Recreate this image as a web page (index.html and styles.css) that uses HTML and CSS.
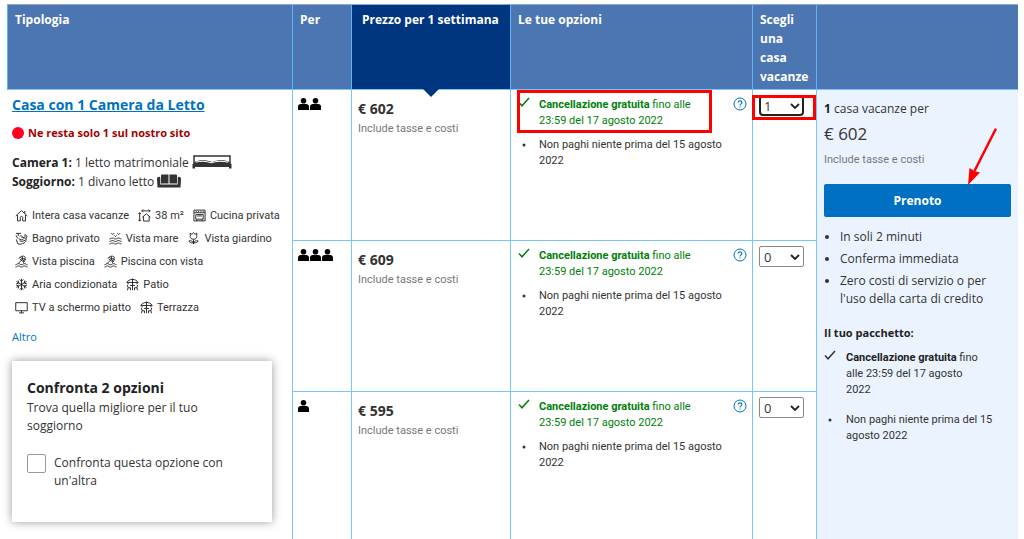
FILE: index.html
```html
<!DOCTYPE html>
<html lang="it">
<head>
<meta charset="utf-8">
<meta name="viewport" content="width=device-width, initial-scale=1">
<title>Casa con 1 Camera da Letto</title>
<link rel="stylesheet" href="styles.css">
</head>
<body>
<svg class="sprite" aria-hidden="true">
  <symbol id="person" viewBox="0 0 11 12"><circle cx="5.500" cy="2.800" r="2.800"/><path d="M0 12V8.700C0 7 1.300 6.300 2.700 6h5.600C9.700 6.300 11 7 11 8.700V12z"/></symbol>
  <symbol id="check" viewBox="0 0 12 10"><path d="M1 5.600l3 3.200L11 1" fill="none" stroke="currentColor" stroke-width="1.500"/></symbol>
  <symbol id="dot" viewBox="0 0 12 10"><circle cx="6" cy="5" r="1.500"/></symbol>
  <symbol id="chevron" viewBox="0 0 10 6"><path d="M1 1l4 4 4-4" fill="none" stroke="currentColor" stroke-width="1.800"/></symbol>
  <symbol id="help" viewBox="0 0 14 14"><circle cx="7" cy="7" r="6" fill="none" stroke="currentColor"/><path d="M5.200 5.600C5.200 3.200 8.900 3.300 8.900 5.500 8.900 6.800 7 6.900 7 8.400M7 9.500v1.100" fill="none" stroke="currentColor" stroke-width="1.100"/></symbol>
  <symbol id="house" viewBox="0 0 14 14"><path d="M.8 7.500L7 1.700l6.200 5.800M2.700 6.500v6.300h3V9.200c0-1.600 2.600-1.600 2.600 0v3.600h3V6.500M10.500 4.500V2.200"/></symbol>
  <symbol id="size" viewBox="0 0 14 14"><path d="M4 2h9M5.500.5L4 2l1.500 1.500M11.500.5L13 2l-1.500 1.500M1.800 4v9M.3 5.500L1.800 4l1.500 1.500M.3 11.500L1.800 13l1.500-1.500M4.500 9L9 5.200 13.500 9M6 8v5h6V8"/></symbol>
  <symbol id="oven" viewBox="0 0 14 14"><path d="M1 1.200h12v11.600H1zM1 4h12M3 2.600h1M5.500 2.600h1M8 2.600h1M10.500 2.600h1M3 6h8v5H3zM4.500 7.500h5M4 13v-1.500M10 13v-1.500"/></symbol>
  <symbol id="bath" viewBox="0 0 14 14"><path d="M1 1.500h5.500M3.500 1.500v2.800M1 3.500l2 3.500M1.500 8l1.300 4.500c2 1 4 .8 5.500-.5M5 4.500c2.500-1.500 3.500 1 2 2M4 7c2 1.800 4 1.800 5.500 0M5 9.500c2 1 4.500.5 6-1M9.500 3.500c2.500-1.500 4.500 1.500 2.500 3M8 5.500l4 1.500c.5 2-1 4.500-3.500 5.500M11.500 4.500l-1.500 1"/></symbol>
  <symbol id="sea" viewBox="0 0 14 14"><path d="M2.500 1.200l1.500 1.500 1.500-1.500M9 1.200l1.500 1.500L12 1.200M5.700 3.700L7 5l1.300-1.300M.5 7.500c1.500 0 1.500-1 3.200-1s1.600 1 3.300 1 1.600-1 3.300-1 1.700 1 3.200 1M.5 10.200c1.500 0 1.500-1 3.200-1s1.600 1 3.300 1 1.600-1 3.300-1 1.700 1 3.200 1M.5 12.900c1.500 0 1.500-1 3.200-1s1.600 1 3.300 1 1.600-1 3.300-1 1.700 1 3.200 1"/></symbol>
  <symbol id="flower" viewBox="0 0 14 14"><path d="M3.500 1.200L5.300 2.500 7 .9l1.700 1.600 1.800-1.300v3.600c0 1.700-1.200 3-3.500 3s-3.500-1.300-3.500-3zM7 8v5M7 11.800c-3.200 0-4.500-.8-5-2.200 2.500-.5 4 .2 5 2.200M7 11.800c3.200 0 4.500-.8 5-2.200-2.500-.5-4 .2-5 2.200"/></symbol>
  <symbol id="pool" viewBox="0 0 14 14"><path d="M5.500 4.500L9 7.200M3.500 9L8 4.500C6 1.500 4 2.500 4.500 4M5.500 2.500C7.500.5 11 .8 11.500 3.500M8 4.500c2-1.500 3.500-1 3.500.8M8 1.500v3l2 2.500-1 1.500M9.500 4.500c1.500 0 2 2-.5 2.500M.5 10.500c1.500 0 1.500-1.200 3.200-1.200s1.600 1.200 3.300 1.200 1.600-1.200 3.300-1.200 1.700 1.200 3.200 1.200M.5 13c1.500 0 1.500-1.200 3.200-1.200S5.300 13 7 13s1.600-1.200 3.300-1.200S12 13 13.500 13"/></symbol>
  <symbol id="snow" viewBox="0 0 14 14"><path d="M7 .8v12.400M1.600 3.900l10.800 6.200M1.600 10.100l10.800-6.200M5 1.500l2 2 2-2M5 12.500l2-2 2 2M1.300 6.300L4 5.500 3.400 2.700M12.700 6.300L10 5.500l.6-2.800M1.300 7.700l2.700.8-.6 2.800M12.700 7.700l-2.700.8.600 2.800"/></symbol>
  <symbol id="patio" viewBox="0 0 14 14"><path d="M.8 4.800C2 2.800 4.500 1.500 7 1.500s5 1.300 6.200 3.300zM7 .5v12.700M2.200 5v1.800M11.800 5v1.800M4.200 8h5.600M1.500 7.500l.8 3h2.500v2.700M2.300 10.500l-.8 2.700M12.500 7.500l-.8 3H9.200v2.700M11.700 10.500l.8 2.700"/></symbol>
  <symbol id="tv" viewBox="0 0 14 14"><path d="M.8 1.800h12.400v8.700H.8zM7 10.500v2.300M4.300 12.800h5.400"/></symbol>
</svg>

<main class="page">
<table class="rooms">
  <colgroup>
    <col class="col-type"><col class="col-guests"><col class="col-price"><col class="col-options"><col class="col-qty"><col class="col-book">
  </colgroup>
  <thead>
    <tr>
      <th scope="col">Tipologia</th>
      <th scope="col">Per</th>
      <th scope="col" class="head-price">Prezzo per 1 settimana</th>
      <th scope="col">Le tue opzioni</th>
      <th scope="col" id="qty-head">Scegli una casa vacanze</th>
      <th scope="col" aria-label="Prenotazione"></th>
    </tr>
  </thead>
  <tbody>
    <tr>
      <td class="type" rowspan="3">
        <a class="room-name" href="#camera">Casa con 1 Camera da Letto</a>
        <p class="scarcity"><span class="red-dot"></span>Ne resta solo 1 sul nostro sito</p>
        <p class="beds"><b>Camera 1:</b> 1 letto matrimoniale
          <svg class="bed" viewBox="0 0 40 14"><path d="M2 8V1h36v7" fill="none" stroke="currentColor" stroke-width="1.500"/><path d="M3 7c3-2.500 12-2.500 17 0 5-2.500 14-2.500 17 0l2.500 2v4.500H37V12H3v1.500H.5V9z"/><path d="M4 7.200c4-1.300 10-1.300 15 .6 6-1.900 12-1.900 17-.6" fill="none" stroke="#fff" stroke-width="1"/></svg><br>
          <b>Soggiorno:</b> 1 divano letto
          <svg class="sofa" viewBox="0 0 24 14"><path d="M4 1.500Q4 .5 5 .5h6.500v9H4zM12.500.5H19q1 0 1 1v8h-7.500z"/><path d="M1 3q2-1 2.300 1v6.500h17.400V4Q21 2 23 3q1 .5 1 2l-.5 8.500H.5L0 5q0-1.500 1-2z"/></svg>
        </p>
        <ul class="facilities">
          <li><svg><use href="#house"/></svg>Intera casa vacanze</li>
          <li><svg><use href="#size"/></svg>38 m²</li>
          <li><svg><use href="#oven"/></svg>Cucina privata</li>
          <li><svg><use href="#bath"/></svg>Bagno privato</li>
          <li><svg><use href="#sea"/></svg>Vista mare</li>
          <li><svg><use href="#flower"/></svg>Vista giardino</li>
          <li><svg><use href="#pool"/></svg>Vista piscina</li>
          <li><svg><use href="#pool"/></svg>Piscina con vista</li>
          <li><svg><use href="#snow"/></svg>Aria condizionata</li>
          <li><svg><use href="#patio"/></svg>Patio</li>
          <li><svg><use href="#tv"/></svg>TV a schermo piatto</li>
          <li><svg><use href="#patio"/></svg>Terrazza</li>
        </ul>
        <a class="more" href="#altro">Altro</a>
        <section class="compare">
          <h2>Confronta 2 opzioni</h2>
          <p>Trova quella migliore per il tuo soggiorno</p>
          <div class="compare-pick">
            <input type="checkbox" id="compare">
            <label for="compare">Confronta questa opzione con un'altra</label>
          </div>
        </section>
      </td>
      <td class="guests"><svg><use href="#person"/></svg><svg><use href="#person"/></svg></td>
      <td class="price"><strong>€ 602</strong><span>Include tasse e costi</span></td>
      <td class="options marked">
        <div class="options-row">
          <ul class="terms">
            <li class="free"><svg><use href="#check"/></svg><span><b>Cancellazione gratuita</b> fino alle 23:59 del 17 agosto 2022</span></li>
            <li><svg><use href="#dot"/></svg><span>Non paghi niente prima del 15 agosto 2022</span></li>
          </ul>
          <button class="help" type="button" aria-label="Informazioni"><svg><use href="#help"/></svg></button>
        </div>
      </td>
      <td class="qty marked">
        <div class="select active"><select aria-labelledby="qty-head"><option>0</option><option selected>1</option></select><svg><use href="#chevron"/></svg></div>
      </td>
      <td class="book" rowspan="3">
        <p class="book-count"><b>1</b> casa vacanze per</p>
        <p class="book-price">€ 602</p>
        <p class="book-note">Include tasse e costi</p>
        <button class="reserve" type="button">Prenoto</button>
        <ul class="perks">
          <li>In soli 2 minuti</li>
          <li>Conferma immediata</li>
          <li>Zero costi di servizio o per l'uso della carta di credito</li>
        </ul>
        <h3>Il tuo pacchetto:</h3>
        <ul class="terms package">
          <li><svg><use href="#check"/></svg><span><b>Cancellazione gratuita</b> fino alle 23:59 del 17 agosto 2022</span></li>
          <li><svg><use href="#dot"/></svg><span>Non paghi niente prima del 15 agosto 2022</span></li>
        </ul>
        <svg class="arrow" viewBox="0 0 30 58"><path d="M28.500 1.500L8 42" stroke="#f00" stroke-width="2.500" stroke-linecap="round"/><path d="M1 57L2.500 40l5 3 5.500 1.500z" fill="#f00"/></svg>
      </td>
    </tr>
    <tr>
      <td class="guests"><svg><use href="#person"/></svg><svg><use href="#person"/></svg><svg><use href="#person"/></svg></td>
      <td class="price"><strong>€ 609</strong><span>Include tasse e costi</span></td>
      <td class="options">
        <div class="options-row">
          <ul class="terms">
            <li class="free"><svg><use href="#check"/></svg><span><b>Cancellazione gratuita</b> fino alle 23:59 del 17 agosto 2022</span></li>
            <li><svg><use href="#dot"/></svg><span>Non paghi niente prima del 15 agosto 2022</span></li>
          </ul>
          <button class="help" type="button" aria-label="Informazioni"><svg><use href="#help"/></svg></button>
        </div>
      </td>
      <td class="qty"><div class="select"><select aria-labelledby="qty-head"><option>0</option><option>1</option></select><svg><use href="#chevron"/></svg></div></td>
    </tr>
    <tr>
      <td class="guests"><svg><use href="#person"/></svg></td>
      <td class="price"><strong>€ 595</strong><span>Include tasse e costi</span></td>
      <td class="options">
        <div class="options-row">
          <ul class="terms">
            <li class="free"><svg><use href="#check"/></svg><span><b>Cancellazione gratuita</b> fino alle 23:59 del 17 agosto 2022</span></li>
            <li><svg><use href="#dot"/></svg><span>Non paghi niente prima del 15 agosto 2022</span></li>
          </ul>
          <button class="help" type="button" aria-label="Informazioni"><svg><use href="#help"/></svg></button>
        </div>
      </td>
      <td class="qty"><div class="select"><select aria-labelledby="qty-head"><option>0</option><option>1</option></select><svg><use href="#chevron"/></svg></div></td>
    </tr>
  </tbody>
</table>
</main>
</body>
</html>
```
FILE: styles.css
```css
*, *::before, *::after { box-sizing: border-box; }

:root { --small-font: Roboto, "Noto Sans", sans-serif; }

body {
  margin: 0;
  background: #fff;
  color: #333;
  font: 13px/18px "Open Sans", "Noto Sans", sans-serif;
}

p, h2, h3, ul { margin: 0; padding: 0; }
ul { list-style: none; }
b { color: #222; }
button, select, input { font: inherit; margin: 0; }
.sprite { display: none; }
svg { fill: currentColor; }

.page { padding: 4px 6px 0 7px; }

.rooms {
  width: 100%;
  table-layout: fixed;
  border-collapse: separate;
  border-spacing: 0;
}

.col-guests { width: 59px; }
.col-price { width: 159px; }
.col-options { width: 242px; }
.col-qty { width: 64px; }
.col-book { width: 202px; }

th, td { vertical-align: top; text-align: left; }

th {
  height: 86px;
  padding: 5px 7px 3px;
  border-left: 1px solid #5fb4f5;
  border-top: 1px solid #8fa9d2;
  border-bottom: 1px solid #7cc3fa;
  background: #4c76b2;
  color: #fff;
  font-size: 12px;
  line-height: 19px;
  font-weight: 700;
}

.head-price {
  position: relative;
  padding-left: 10px;
  background: #003580;
  white-space: nowrap;
}
.head-price::after {
  content: "";
  position: absolute;
  top: 100%;
  left: 50%;
  border: 8px solid transparent;
  border-top-color: #003580;
  border-bottom: 0;
  transform: translateX(-50%);
}

td {
  height: 151px;
  border-left: 1px solid #7cc3fa;
  border-bottom: 1px solid #7cc3fa;
}
tr:last-child td, td[rowspan] { border-bottom: 0; }
tr:last-child td { height: 147px; }

.type { padding: 5px 8px 0 5px; border-left: 0; }
.room-name {
  display: block;
  color: #0071c2;
  font-size: 14px;
  line-height: 20px;
  font-weight: 700;
}
.scarcity {
  display: flex;
  align-items: center;
  gap: 4px;
  margin-top: 9px;
  color: #a30000;
  font-size: 11px;
  font-weight: 700;
}
.red-dot { width: 12px; height: 12px; border-radius: 50%; background: #ff0022; }
.beds { margin-top: 11px; font-size: 12px; line-height: 19px; }
.bed { width: 40px; height: 14px; vertical-align: -2px; }
.sofa { width: 24px; height: 14px; vertical-align: -2px; }

.facilities {
  display: flex;
  flex-wrap: wrap;
  column-gap: 9px;
  margin-top: 13px;
  padding-left: 3px;
  font: 11px/23px var(--small-font);
}
.facilities li { display: flex; align-items: center; gap: 4px; white-space: nowrap; }
.facilities svg { width: 13px; height: 13px; fill: none; stroke: #222; stroke-width: 1; }

.more { display: block; margin-top: 9px; color: #0071c2; font-size: 11px; text-decoration: none; }

.compare {
  margin: 15px 12px 0 0;
  padding: 17px 15px 32px;
  background: #fff;
  box-shadow: 0 0 9px rgba(0, 0, 0, .4);
  font-size: 12px;
}
.compare h2 { color: #222; font-size: 14px; line-height: 20px; }
.compare p { margin-top: 1px; padding-right: 40px; }
.compare-pick { display: flex; align-items: flex-start; gap: 8px; margin-top: 19px; }
.compare-pick input {
  appearance: none;
  flex: none;
  width: 19px;
  height: 19px;
  border: 1px solid #999;
  border-radius: 2px;
  background: #fff;
}

.guests { padding: 8px 5px; line-height: 12px; white-space: nowrap; color: #000; }
.guests svg { width: 11px; height: 12px; margin-right: 1px; }

.price { padding: 9px 6px; }
.price strong { display: block; font-size: 14px; line-height: 20px; }
.price span { display: block; margin-top: 1px; color: #777; font: 11px/18px var(--small-font); }

.options { position: relative; padding: 7px 5px 0 7px; }
.options-row { display: flex; align-items: flex-start; justify-content: space-between; }
.terms { display: grid; gap: 8px; font: 11px/16px var(--small-font); }
.terms li { display: flex; gap: 9px; }
.terms svg { flex: none; width: 12px; height: 10px; }
.terms li:last-child svg { margin-top: 3px; }
.options .terms { width: 212px; }
.options .free { padding-right: 25px; }
.free, .free b { color: #008009; }
.help { flex: none; width: 14px; height: 14px; padding: 0; border: 0; background: none; color: #0071c2; line-height: 0; }
.help svg { width: 14px; height: 14px; }

.marked::after { content: ""; position: absolute; border: 3px solid #f00; pointer-events: none; }
.options.marked::after { inset: 0 40px auto 6px; height: 43px; }
.qty.marked::after { inset: 5px 0 auto -1px; height: 25px; }

.qty { position: relative; padding: 5px 6px; }
.select { position: relative; width: 45px; }
.select select {
  display: block;
  appearance: none;
  width: 100%;
  height: 21px;
  padding: 0 4px;
  border: 1px solid #888;
  border-radius: 2px;
  background: #fff;
  color: #333;
  font-size: 13px;
  line-height: 18px;
}
.select svg { position: absolute; right: 4px; top: 8px; width: 10px; height: 6px; pointer-events: none; color: #222; }
.select.active select { border: 2px solid #222; border-radius: 4px; padding: 0 3px; }

.book { position: relative; padding: 9px 7px 0; background: #ebf3ff; }
.book-count { font-size: 12px; line-height: 20px; }
.book-price { margin-top: 2px; font-size: 17px; line-height: 26px; }
.book-note { margin-top: 4px; color: #777; font: 11px/18px var(--small-font); }
.reserve {
  width: 100%;
  height: 33px;
  margin-top: 15px;
  border: 0;
  border-radius: 2px;
  background: #0071c2;
  color: #fff;
  font-size: 12px;
  font-weight: 700;
}
.perks { display: grid; gap: 4px; margin-top: 11px; padding-left: 16px; list-style: disc; font-size: 12px; }
.book h3 { margin-top: 16px; color: #222; font-size: 11px; line-height: 18px; }
.package { gap: 14px; margin-top: 8px; padding-right: 8px; }
.package li { gap: 10px; }
.package li:first-child { padding-right: 14px; }
.arrow { position: absolute; right: 21px; top: 38px; width: 30px; height: 58px; }
```
